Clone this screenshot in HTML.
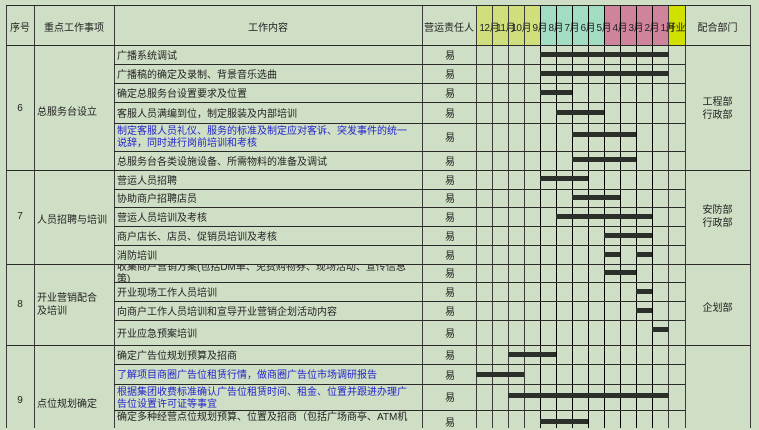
<!DOCTYPE html>
<html><head><meta charset="utf-8"><style>
body{margin:0;width:759px;height:428px;overflow:hidden;background:#cfdfc5;position:relative;font-family:"Liberation Sans","Noto Sans CJK SC",sans-serif;font-size:10px;color:#222}
div{position:absolute}
.v{top:5px;height:423px;width:1px;background:#3a3a3a}
.vm{top:5px;height:423px;width:1px;background:#000}
.h{height:1px;background:#2a2a2a}
.b{height:5px;background:#2c2e2a}
.t{left:117px;white-space:nowrap;line-height:12px;margin-top:2px}
.bl{color:#2222cc}
.y{left:442px;width:16px;text-align:center;margin-top:2px;line-height:12px}
.c{text-align:center}
.m{top:19px;white-space:nowrap;text-align:right;letter-spacing:-0.5px}
</style></head><body>
<div style="left:476px;top:5px;width:64px;height:40px;background:#d0df7c"></div>
<div style="left:540px;top:5px;width:64px;height:40px;background:#a2dcc3"></div>
<div style="left:604px;top:5px;width:64px;height:40px;background:#d0849c"></div>
<div style="left:668px;top:5px;width:17px;height:40px;background:#d2e000"></div>

<div class="m" style="left:468px;width:31px">12月</div>
<div class="m" style="left:484px;width:31px">11月</div>
<div class="m" style="left:500px;width:31px">10月</div>
<div class="m" style="left:516px;width:31px">9月</div>
<div class="m" style="left:532px;width:31px">8月</div>
<div class="m" style="left:548px;width:31px">7月</div>
<div class="m" style="left:564px;width:31px">6月</div>
<div class="m" style="left:580px;width:31px">5月</div>
<div class="m" style="left:596px;width:31px">4月</div>
<div class="m" style="left:612px;width:31px">3月</div>
<div class="m" style="left:628px;width:31px">2月</div>
<div class="m" style="left:644px;width:31px">1月</div>
<div class="m" style="left:666px;width:20px;text-align:left">开业</div>

<div class="v" style="left:6px"></div>
<div class="v" style="left:34px"></div>
<div class="v" style="left:114px"></div>
<div class="v" style="left:422px"></div>
<div class="v" style="left:476px"></div>
<div class="v" style="left:492px"></div>
<div class="v" style="left:508px"></div>
<div class="v" style="left:524px"></div>
<div class="vm" style="left:540px"></div>
<div class="vm" style="left:556px"></div>
<div class="vm" style="left:572px"></div>
<div class="vm" style="left:588px"></div>
<div class="vm" style="left:604px"></div>
<div class="vm" style="left:620px"></div>
<div class="vm" style="left:636px"></div>
<div class="vm" style="left:652px"></div>
<div class="v" style="left:668px"></div>
<div class="v" style="left:685px"></div>
<div class="v" style="left:750px"></div>

<div class="h" style="left:6px;width:745px;top:5px"></div>
<div class="h" style="left:6px;width:745px;top:45px"></div>
<div class="h" style="left:114px;width:571px;top:64px"></div>
<div class="h" style="left:114px;width:571px;top:83px"></div>
<div class="h" style="left:114px;width:571px;top:102px"></div>
<div class="h" style="left:114px;width:571px;top:123px"></div>
<div class="h" style="left:114px;width:571px;top:151px"></div>
<div class="h" style="left:6px;width:745px;top:170px"></div>
<div class="h" style="left:114px;width:571px;top:189px"></div>
<div class="h" style="left:114px;width:571px;top:207px"></div>
<div class="h" style="left:114px;width:571px;top:226px"></div>
<div class="h" style="left:114px;width:571px;top:245px"></div>
<div class="h" style="left:6px;width:745px;top:264px"></div>
<div class="h" style="left:114px;width:571px;top:282px"></div>
<div class="h" style="left:114px;width:571px;top:301px"></div>
<div class="h" style="left:114px;width:571px;top:320px"></div>
<div class="h" style="left:6px;width:745px;top:345px"></div>
<div class="h" style="left:114px;width:571px;top:364px"></div>
<div class="h" style="left:114px;width:571px;top:384px"></div>
<div class="h" style="left:114px;width:571px;top:410px"></div>

<div class="c" style="left:6px;width:28px;top:19px">序号</div>
<div class="c" style="left:34px;width:80px;top:19px">重点工作事项</div>
<div class="c" style="left:114px;width:308px;top:19px">工作内容</div>
<div style="left:424px;top:19px;white-space:nowrap">营运责任人</div>
<div class="c" style="left:685px;width:65px;top:19px">配合部门</div>

<div class="c" style="left:6px;width:28px;top:103px">6</div>
<div style="left:37px;top:103px">总服务台设立</div>
<div class="c" style="left:6px;width:28px;top:211px">7</div>
<div style="left:37px;top:211px">人员招聘与培训</div>
<div class="c" style="left:6px;width:28px;top:299px">8</div>
<div style="left:37px;top:292px;line-height:13px">开业营销配合<br>及培训</div>
<div class="c" style="left:6px;width:28px;top:395px">9</div>
<div style="left:37px;top:395px">点位规划确定</div>
<div class="c" style="left:685px;width:65px;top:96px;line-height:13px">工程部<br>行政部</div>
<div class="c" style="left:685px;width:65px;top:204px;line-height:13px">安防部<br>行政部</div>
<div class="c" style="left:685px;width:65px;top:299px">企划部</div>

<div class="t" style="top:49px">广播系统调试</div>
<div class="t" style="top:68px">广播稿的确定及录制、背景音乐选曲</div>
<div class="t" style="top:87px">确定总服务台设置要求及位置</div>
<div class="t" style="top:107px">客服人员满编到位，制定服装及内部培训</div>
<div class="t bl" style="top:124px">制定客服人员礼仪、服务的标准及制定应对客诉、突发事件的统一<br>说辞，同时进行岗前培训和考核</div>
<div class="t" style="top:155px">总服务台各类设施设备、所需物料的准备及调试</div>
<div class="t" style="top:174px">营运人员招聘</div>
<div class="t" style="top:192px">协助商户招聘店员</div>
<div class="t" style="top:211px">营运人员培训及考核</div>
<div class="t" style="top:230px">商户店长、店员、促销员培训及考核</div>
<div class="t" style="top:249px">消防培训</div>
<div style="left:115px;top:265px;width:307px;height:17px;overflow:hidden"><div class="t" style="left:2px;top:-5px">收集商户营销方案(包括DM单、免费购物券、现场活动、宣传信息<br>策)</div></div>
<div class="t" style="top:286px">开业现场工作人员培训</div>
<div class="t" style="top:305px">向商户工作人员培训和宣导开业营销企划活动内容</div>
<div class="t" style="top:327px">开业应急预案培训</div>
<div class="t" style="top:349px">确定广告位规划预算及招商</div>
<div class="t bl" style="top:368px">了解项目商圈广告位租赁行情，做商圈广告位市场调研报告</div>
<div class="t bl" style="top:385px">根据集团收费标准确认广告位租赁时间、租金、位置并跟进办理广<br>告位设置许可证等事宜</div>
<div class="t" style="top:410px">确定多种经营点位规划预算、位置及招商（包括广场商亭、ATM机</div>

<div class="y" style="top:49px">易</div>
<div class="y" style="top:68px">易</div>
<div class="y" style="top:87px">易</div>
<div class="y" style="top:107px">易</div>
<div class="y" style="top:131px">易</div>
<div class="y" style="top:155px">易</div>
<div class="y" style="top:174px">易</div>
<div class="y" style="top:192px">易</div>
<div class="y" style="top:211px">易</div>
<div class="y" style="top:230px">易</div>
<div class="y" style="top:249px">易</div>
<div class="y" style="top:267px">易</div>
<div class="y" style="top:286px">易</div>
<div class="y" style="top:305px">易</div>
<div class="y" style="top:327px">易</div>
<div class="y" style="top:349px">易</div>
<div class="y" style="top:369px">易</div>
<div class="y" style="top:391px">易</div>
<div class="y" style="top:416px">易</div>

<div class="b" style="left:540px;width:129px;top:52px"></div>
<div class="b" style="left:540px;width:129px;top:71px"></div>
<div class="b" style="left:540px;width:32px;top:90px"></div>
<div class="b" style="left:556px;width:48px;top:110px"></div>
<div class="b" style="left:572px;width:64px;top:132px"></div>
<div class="b" style="left:572px;width:64px;top:157px"></div>
<div class="b" style="left:540px;width:48px;top:176px"></div>
<div class="b" style="left:572px;width:48px;top:195px"></div>
<div class="b" style="left:556px;width:96px;top:214px"></div>
<div class="b" style="left:604px;width:48px;top:233px"></div>
<div class="b" style="left:604px;width:16px;top:252px"></div>
<div class="b" style="left:636px;width:16px;top:252px"></div>
<div class="b" style="left:604px;width:32px;top:270px"></div>
<div class="b" style="left:636px;width:16px;top:289px"></div>
<div class="b" style="left:636px;width:16px;top:308px"></div>
<div class="b" style="left:652px;width:17px;top:327px"></div>
<div class="b" style="left:508px;width:48px;top:352px"></div>
<div class="b" style="left:476px;width:48px;top:372px"></div>
<div class="b" style="left:508px;width:161px;top:393px"></div>
<div class="b" style="left:540px;width:48px;top:419px"></div>
</body></html>
